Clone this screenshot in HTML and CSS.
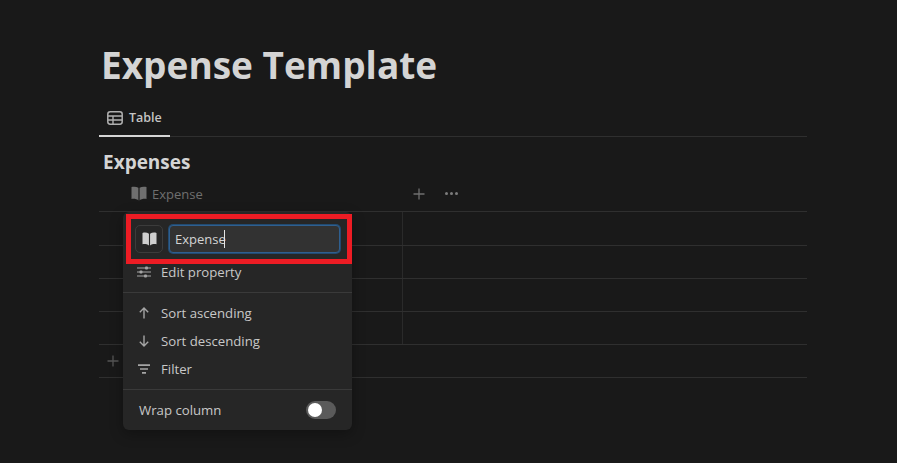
FILE: index.html
```html
<!DOCTYPE html>
<html lang="en">
<head>
<meta charset="utf-8">
<title>Expense Template</title>
<link rel="stylesheet" href="styles.css">
</head>
<body>
<main class="page">
  <h1 class="title">Expense Template</h1>
  <div class="tabs">
    <div class="tab">
      <svg class="tab-icon" viewBox="0 0 16 14" width="16" height="14"><rect x="0.8" y="0.8" width="14.4" height="12.4" rx="2.4" fill="none" stroke="#b0b0b0" stroke-width="1.5"/><path d="M1 5h14M1 9h14M6 5v8" stroke="#b0b0b0" stroke-width="1.4" fill="none"/></svg>
      <span>Table</span>
    </div>
  </div>
  <h2 class="db-title">Expenses</h2>
  <div class="head-row">
    <div class="col-name">
      <svg viewBox="0 0 16 15" width="16" height="15"><path d="M0.5 1C3 .3 5.6.6 7.4 1.8V14.4C5.6 13 3 12.6.5 13ZM15.5 1C13 .3 10.4.6 8.6 1.8V14.4C10.4 13 13 12.6 15.5 13Z" fill="#6f6f6f"/></svg>
      <span>Expense</span>
    </div>
    <svg class="plus" viewBox="0 0 12 12" width="12" height="12"><path d="M6 0.5v11M0.5 6h11" stroke="#6f6f6f" stroke-width="1.3"/></svg>
    <svg class="dots" viewBox="0 0 13 3" width="13" height="3"><circle cx="1.5" cy="1.5" r="1.5" fill="#7c7c7c"/><circle cx="6.5" cy="1.5" r="1.5" fill="#7c7c7c"/><circle cx="11.5" cy="1.5" r="1.5" fill="#7c7c7c"/></svg>
  </div>
  <div class="rows">
    <div class="row tall"><div class="cell"></div></div>
    <div class="row"><div class="cell"></div></div>
    <div class="row"><div class="cell"></div></div>
    <div class="row"><div class="cell"></div></div>
    <div class="row new">
      <svg viewBox="0 0 12 12" width="12" height="12"><path d="M6 0.5v11M0.5 6h11" stroke="#555" stroke-width="1.3"/></svg>
    </div>
  </div>
</main>

<div class="menu">
  <div class="name-box">
    <div class="icon-btn">
      <svg viewBox="0 0 16 15" width="15" height="14"><path d="M0.5 1C3 .3 5.6.6 7.4 1.8V14.4C5.6 13 3 12.6.5 13ZM15.5 1C13 .3 10.4.6 8.6 1.8V14.4C10.4 13 13 12.6 15.5 13Z" fill="#cfcfcf"/></svg>
    </div>
    <div class="name-input"><span>Expense</span><i class="caret"></i></div>
  </div>
  <div class="item first">
    <svg viewBox="0 0 14 12" width="14" height="12"><path d="M0 2h14M0 6h14M0 10h14" stroke="#a5a5a5" stroke-width="1.2"/><rect x="8" y="0.5" width="3" height="3" rx="1" fill="#a5a5a5"/><rect x="2.5" y="4.5" width="3" height="3" rx="1" fill="#a5a5a5"/><rect x="7" y="8.5" width="3" height="3" rx="1" fill="#a5a5a5"/></svg>
    <span>Edit property</span>
  </div>
  <div class="sep"></div>
  <div class="group">
    <div class="item">
      <svg viewBox="0 0 14 12" width="14" height="12"><path d="M7 11.5V1M2.8 5.2 7 1l4.2 4.2" fill="none" stroke="#a5a5a5" stroke-width="1.4"/></svg>
      <span>Sort ascending</span>
    </div>
    <div class="item">
      <svg viewBox="0 0 14 12" width="14" height="12"><path d="M7 .5V11M2.8 6.8 7 11l4.2-4.2" fill="none" stroke="#a5a5a5" stroke-width="1.4"/></svg>
      <span>Sort descending</span>
    </div>
    <div class="item">
      <svg viewBox="0 0 14 12" width="14" height="12"><path d="M1 2.2h12M3 6h8M5 9.8h4" fill="none" stroke="#a5a5a5" stroke-width="1.7"/></svg>
      <span>Filter</span>
    </div>
  </div>
  <div class="sep"></div>
  <div class="wrap-row">
    <span>Wrap column</span>
    <div class="toggle"><i class="knob"></i></div>
  </div>
</div>
</body>
</html>
```
FILE: styles.css
```css
* { box-sizing: border-box; }
html, body { margin: 0; height: 100%; }
body {
  background: #191919;
  color: #d4d4d4;
  font-family: "Open Sans", "Noto Sans", sans-serif;
  overflow: hidden;
  position: relative;
}
.page {
  width: 708px;
  margin-left: 99px;
  padding-top: 41px;
}
.title {
  margin: 0 0 0 2px;
  font-size: 37px;
  line-height: 48px;
  font-weight: 700;
  color: #d4d4d4;
}
.tabs {
  margin-top: 11px;
  height: 37px;
  border-bottom: 1px solid #2f2f2f;
  display: flex;
}
.tab {
  width: 71px;
  height: 37px;
  border-bottom: 2px solid #d4d4d4;
  display: flex;
  align-items: center;
  gap: 6px;
  padding-left: 8px;
  font-size: 12.5px;
  font-weight: 600;
  color: #c4c4c4;
}
.db-title {
  margin: 12px 0 0 4px;
  font-size: 19px;
  line-height: 26px;
  font-weight: 700;
  color: #d4d4d4;
}
.head-row {
  height: 37px;
  display: flex;
  align-items: center;
  border-bottom: 1px solid #2f2f2f;
  padding: 1px 0 0 32px;
}
.col-name {
  width: 282px;
  display: flex;
  align-items: center;
  gap: 5px;
  font-size: 13px;
  color: #6f6f6f;
}
.dots { margin-left: 20px; }
.row {
  height: 33px;
  border-bottom: 1px solid #2f2f2f;
}
.row.tall { height: 34px; }
.cell {
  width: 304px;
  height: 100%;
  border-right: 1px solid #2a2a2a;
}
.row.new {
  display: flex;
  align-items: center;
  padding-left: 8px;
}
.menu {
  position: absolute;
  left: 123px;
  top: 212px;
  width: 229px;
  height: 218px;
  background: #262626;
  border-radius: 6px;
  box-shadow: 0 4px 14px rgba(0,0,0,.3);
  font-size: 13.2px;
  color: #c8c8c8;
}
.name-box {
  margin: 2px 0 0 3px;
  width: 226px;
  height: 50px;
  border: 5px solid #ed1c24;
  display: flex;
  align-items: center;
  gap: 6px;
  padding-left: 4px;
}
.icon-btn {
  width: 28px;
  height: 28px;
  border: 1px solid #3c3c3c;
  border-radius: 5px;
  display: flex;
  align-items: center;
  justify-content: center;
}
.name-input {
  width: 171px;
  height: 28px;
  background: #323232;
  border: 1px solid #2f5f8f;
  box-shadow: 0 0 0 1px #224a70;
  border-radius: 4px;
  display: flex;
  align-items: center;
  padding-left: 5px;
  color: #d4d4d4;
  font-size: 13px;
}
.caret {
  width: 1px;
  height: 18px;
  margin-left: -2px;
  background: #e4e4e4;
}
.item {
  height: 28px;
  display: flex;
  align-items: center;
  gap: 10px;
  padding-left: 14px;
}
.item.first { height: 16px; }
.sep {
  height: 1px;
  background: #3a3a3a;
}
.first + .sep { margin-top: 12px; }
.group { padding: 6px 0; }
.wrap-row {
  height: 40px;
  display: flex;
  align-items: center;
  justify-content: space-between;
  padding: 0 16px;
}
.toggle {
  width: 30px;
  height: 18px;
  border-radius: 9px;
  background: #5a5a5a;
  padding: 2px;
}
.knob {
  display: block;
  width: 14px;
  height: 14px;
  border-radius: 50%;
  background: #fff;
}
```
